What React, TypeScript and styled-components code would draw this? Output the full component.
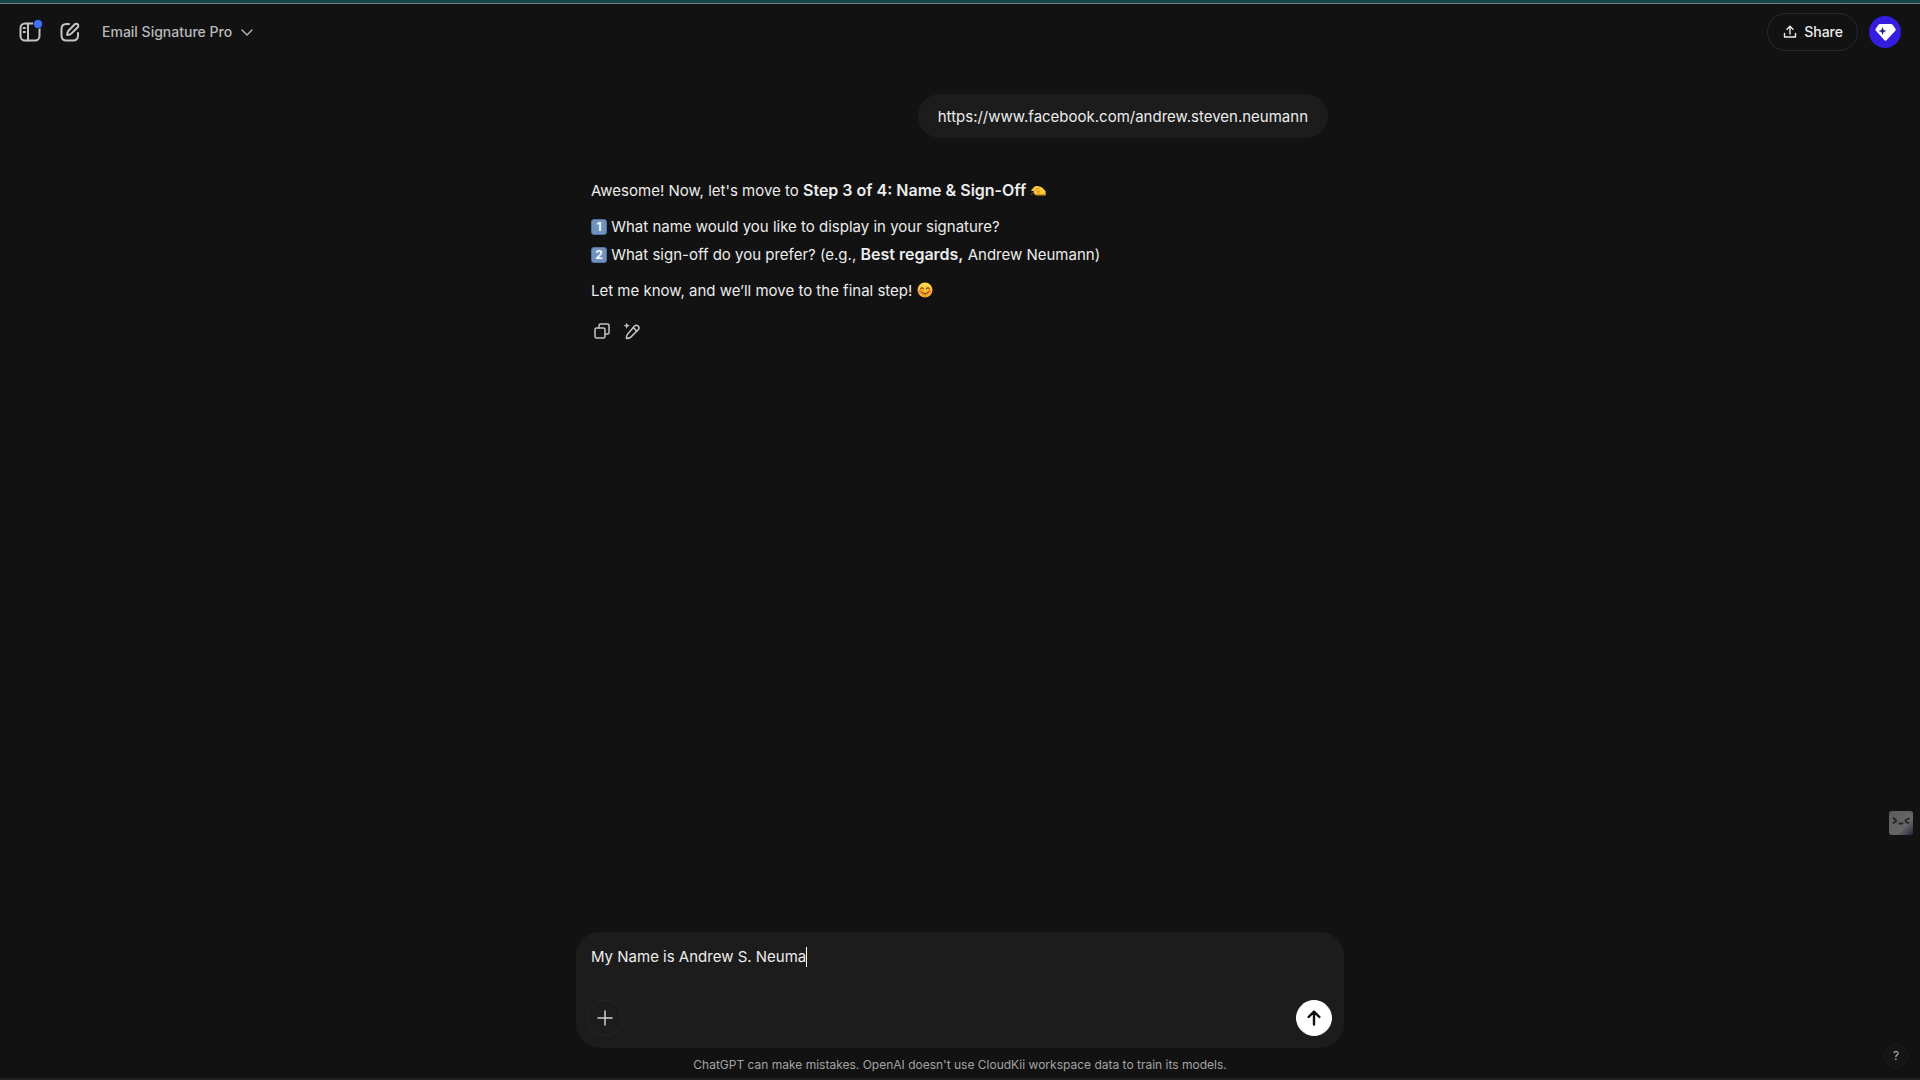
import React, { useLayoutEffect, useRef, useState } from "react";
import styled, { createGlobalStyle } from "styled-components";

const FONT = 'Inter, "Liberation Sans", sans-serif';

const GlobalStyle = createGlobalStyle`
  *, *::before, *::after { box-sizing: border-box; }
  body {
    margin: 0;
    background: #121212;
    color: #ececec;
    font: 400 15px/28px ${FONT};
  }
  button, textarea { font-family: inherit; }
`;

const Page = styled.div`
  min-height: 100vh;
  display: flex;
  flex-direction: column;
  border-bottom: 2px solid #242122;
`;

const TopStrip = styled.div`
  height: 4px;
  background: #174649;
  border-bottom: 1px solid #748586;
`;

const Header = styled.header`
  display: flex;
  align-items: center;
  justify-content: space-between;
  height: 56px;
  padding: 0 19px 0 10px;
`;

const HeaderGroup = styled.div`
  display: flex;
  align-items: center;
  gap: ${(p: { $gap?: number }) => p.$gap ?? 0}px;
`;

const IconButton = styled.button<{ $size: number }>`
  position: relative;
  display: flex;
  align-items: center;
  justify-content: center;
  width: ${(p) => p.$size}px;
  height: ${(p) => p.$size}px;
  padding: 0;
  border: 0;
  border-radius: 8px;
  background: transparent;
  color: #c4c4c4;
  cursor: pointer;
`;

const UnreadDot = styled.span`
  position: absolute;
  top: 8px;
  right: 8px;
  width: 8px;
  height: 8px;
  border-radius: 50%;
  background: #4271f5;
  box-shadow: 0 0 0 1px #10184a;
`;

const TitleButton = styled.button`
  display: flex;
  align-items: center;
  gap: 8px;
  padding: 0 12px;
  border: 0;
  background: transparent;
  color: #b9b9b9;
  font-size: 14px;
  font-weight: 500;
  line-height: 36px;
  cursor: pointer;
`;

const ShareButton = styled.button`
  display: flex;
  align-items: center;
  gap: 7px;
  height: 38px;
  padding: 0 14px 1px 15px;
  border: 1px solid #292929;
  border-radius: 19px;
  background: transparent;
  color: #ececec;
  font-size: 14px;
  font-weight: 500;
  cursor: pointer;
`;

const Avatar = styled.button`
  display: flex;
  width: 32px;
  height: 32px;
  padding: 0;
  border: 0;
  border-radius: 50%;
  background: #351de0;
  cursor: pointer;
`;

const Column = styled.main`
  flex: 1;
  width: 100%;
  max-width: 768px;
  margin: 0 auto;
  padding: 34px 16px 0 15px;
`;

const UserBubble = styled.div`
  width: fit-content;
  margin-left: auto;
  padding: 9px 20px 7px;
  border-radius: 22px;
  background: #1c1c1c;
`;

const Reply = styled.article`
  margin-top: 39px;

  p { margin: 0 0 8px; }
  strong { font-size: 16px; font-weight: 600; line-height: 20px; }
`;

const Keycap = styled.span`
  display: inline-block;
  width: 16px;
  height: 16px;
  border: 1px solid #4f749f;
  border-radius: 3px;
  background: #6f93bd;
  color: #f4f8fc;
  font-size: 12px;
  font-weight: 700;
  line-height: 14px;
  text-align: center;
  vertical-align: 1px;
`;

const EmojiSvg = styled.svg`
  width: 16px;
  height: 16px;
  vertical-align: -2px;
`;

const Actions = styled.div`
  display: flex;
  margin-top: 11px;
  margin-left: -4px;
`;

const Footer = styled.footer`
  width: 100%;
  max-width: 768px;
  margin: 0 auto;
`;

const Composer = styled.form`
  display: flex;
  flex-direction: column;
  height: 116px;
  padding: 11px 12px 12px 11px;
  border-radius: 24px;
  background: #1c1c1c;
`;

const Field = styled.div`
  position: relative;
  flex: 1;
  padding: 0 4px;
`;

const Input = styled.textarea`
  display: block;
  width: 100%;
  height: 28px;
  padding: 0;
  border: 0;
  outline: 0;
  resize: none;
  overflow: hidden;
  background: transparent;
  color: #ececec;
  caret-color: transparent;
  font-size: 15px;
  line-height: 28px;
`;

const Caret = styled.span`
  position: absolute;
  top: 4px;
  width: 1px;
  height: 20px;
  background: #ffffff;
`;

const ComposerBar = styled.div`
  display: flex;
  justify-content: space-between;
`;

const RoundButton = styled.button<{ $solid?: boolean }>`
  display: flex;
  align-items: center;
  justify-content: center;
  width: 36px;
  height: 36px;
  padding: 0;
  border: 1px solid ${(p) => (p.$solid ? "#ffffff" : "#272727")};
  border-radius: 50%;
  background: ${(p) => (p.$solid ? "#ffffff" : "transparent")};
  color: ${(p) => (p.$solid ? "#121212" : "#d0d0d0")};
  cursor: pointer;
`;

const Notice = styled.p`
  margin: 0;
  padding: 7px 0 3px;
  color: #a3a3a3;
  font-size: 12px;
  line-height: 20px;
  text-align: center;
`;

const HelpButton = styled.button`
  position: fixed;
  right: 12px;
  bottom: 12px;
  width: 24px;
  height: 24px;
  padding: 0;
  border: 1px solid #1d1d1d;
  border-radius: 50%;
  background: #151515;
  color: #b4b4b4;
  font-size: 12px;
  line-height: 22px;
  cursor: pointer;
`;

const WidgetButton = styled.button`
  position: fixed;
  right: 7px;
  bottom: 245px;
  display: flex;
  width: 24px;
  height: 24px;
  padding: 0;
  border: 0;
  border-radius: 3px;
  background: linear-gradient(135deg, #5c5c5c 0%, #666666 65%, #29263f 100%);
  cursor: pointer;
`;

const stroke = {
  fill: "none",
  stroke: "currentColor",
  strokeLinecap: "round",
  strokeLinejoin: "round",
} as const;

const SidebarIcon = () => (
  <svg width="24" height="24" viewBox="0 0 24 24" strokeWidth="2" {...stroke}>
    <rect x="2.5" y="3.5" width="19" height="17" rx="4.5" />
    <path d="M10 3.5v17" />
    <path d="M5.6 8h1.4M5.6 12h1.4" />
  </svg>
);

const ComposeIcon = () => (
  <svg width="24" height="24" viewBox="0 0 24 24" strokeWidth="2" {...stroke}>
    <path d="M11 4H8.500C5 4 3.500 5.500 3.500 9v6.500c0 3.500 1.500 5 5 5H15c3.500 0 5-1.500 5-5V13" />
    <path d="M16.800 4.300a2.050 2.050 0 0 1 2.900 2.900l-6.400 6.400c-.8.8-2.100 1.300-4.200 1.400.1-2.100.6-3.400 1.400-4.200z" />
  </svg>
);

const ChevronIcon = () => (
  <svg width="14" height="14" viewBox="0 0 14 14" strokeWidth="1.4" {...stroke}>
    <path d="M2 5 7 10 12 5" />
  </svg>
);

const UploadIcon = () => (
  <svg width="14" height="14" viewBox="0 0 14 14" strokeWidth="1.4" {...stroke}>
    <path d="M7 9V1.500M4 4.300l3-3 3 3M1.500 8.500V12h11V8.500" />
  </svg>
);

const GemIcon = () => (
  <svg width="32" height="32" viewBox="0 0 32 32">
    <path d="M11 8h11q1 0 1.600.8l3 4.200q.5.800-.1 1.600l-9 9.600q-1 1-2 0l-8.800-9.600q-.7-.8-.1-1.600l2.800-4.200Q10 8 11 8z" fill="#ffffff" />
    <path d="M13.500 11l1.100 2.900 2.900 1.100-2.900 1.100-1.100 2.900-1.100-2.900L9.500 15l2.900-1.100z" fill="#25207a" />
  </svg>
);

const CopyIcon = () => (
  <svg width="18" height="18" viewBox="0 0 18 18" strokeWidth="1.500" {...stroke}>
    <rect x="2" y="6" width="10" height="10" rx="1.500" />
    <path d="M6 6V3.500Q6 2 7.500 2h7Q16 2 16 3.500v7q0 1.500-1.500 1.500H12" />
  </svg>
);

const EditSparkIcon = () => (
  <svg width="18" height="18" viewBox="0 0 18 18" strokeWidth="1.500" {...stroke}>
    <path d="M11.600 4.100a2.500 2.500 0 0 1 3.600 3.600l-7.400 7.400c-.9.9-2.300 1.300-4.400 1.300 0-2.100.4-3.500 1.300-4.400z" />
    <path d="M10.200 5.500l3.600 3.600" />
    <path d="M3.700.4l.9 2.400 2.400.9-2.400.9-.9 2.400-.9-2.400-2.400-.9 2.400-.9z" fill="currentColor" stroke="none" />
  </svg>
);

const PlusIcon = () => (
  <svg width="18" height="18" viewBox="0 0 18 18" strokeWidth="1.500" {...stroke}>
    <path d="M9 2v14M2 9h14" />
  </svg>
);

const ArrowUpIcon = () => (
  <svg width="18" height="18" viewBox="0 0 18 18" strokeWidth="2.400" {...stroke}>
    <path d="M9 15.500V2.800M3.600 8 9 2.600 14.400 8" />
  </svg>
);

const WidgetFace = () => (
  <svg width="24" height="24" viewBox="0 0 24 24" strokeWidth="1.800" {...stroke} stroke="#262626">
    <path d="M4.500 7l3 2.800-3 2.200M10.500 12.500h3M20 7.500l-3.500 1.500q-.6 2.600 3 2.800" />
  </svg>
);

const WritingHand = () => (
  <EmojiSvg viewBox="0 0 16 16" role="img" aria-label="writing hand">
    <path d="M.8 8.600 4.600 4.600Q5.600 3.600 7.600 4l3 .8q1 .3 1.800 1l3.200 3.100v4.300H6.600c-1.400 0-2.200-.6-2.400-1.700L3.800 9.300z" fill="#fcc838" />
    <path d="M4.200 11.300c2 .9 4 .9 6.200.8l5.200-.1v1.300H6.600c-1.300 0-2.200-.7-2.400-2z" fill="#e08f1a" />
    <path d="M4.500 8.400 7 6.600l2.400.3M6.600 9.400l3.400-.2M6.800 11l3-.1" stroke="#c97d18" strokeWidth=".7" fill="none" />
    <path d="M.4 12.200l3.400-2.700.6.900-3.700 2.400z" fill="#6d6460" />
  </EmojiSvg>
);

const SmilingFace = () => (
  <EmojiSvg viewBox="0 0 16 16" role="img" aria-label="smiling face">
    <defs>
      <linearGradient id="face" x1="0" y1="0" x2="0" y2="1">
        <stop offset="0" stopColor="#ffe154" />
        <stop offset="1" stopColor="#f39a21" />
      </linearGradient>
    </defs>
    <circle cx="8" cy="8" r="7.500" fill="url(#face)" />
    <circle cx="3.300" cy="9.200" r="1.700" fill="#f2703a" opacity=".7" />
    <circle cx="12.700" cy="9.200" r="1.700" fill="#f2703a" opacity=".7" />
    <path d="M3.700 6.700q1.300-2 2.700 0M9.600 6.700q1.300-2 2.700 0M4.600 10q3.400 3.800 6.800 0" fill="none" stroke="#6b3d12" strokeWidth="1.100" strokeLinecap="round" />
  </EmojiSvg>
);

export default function App() {
  const [draft, setDraft] = useState("My Name is Andrew S. Neuma");
  const [caretX, setCaretX] = useState(0);
  const input = useRef<HTMLTextAreaElement>(null);

  useLayoutEffect(() => {
    const ctx = document.createElement("canvas").getContext("2d");
    if (!ctx || !input.current) return;
    ctx.font = `15px ${FONT}`;
    setCaretX(input.current.offsetLeft + Math.round(ctx.measureText(draft).width));
  }, [draft]);

  return (
    <>
      <GlobalStyle />
      <Page>
        <TopStrip />
        <Header>
          <HeaderGroup>
            <IconButton $size={40} type="button" aria-label="Open sidebar">
              <SidebarIcon />
              <UnreadDot />
            </IconButton>
            <IconButton $size={40} type="button" aria-label="New chat">
              <ComposeIcon />
            </IconButton>
            <TitleButton type="button">
              Email Signature Pro
              <ChevronIcon />
            </TitleButton>
          </HeaderGroup>
          <HeaderGroup $gap={11}>
            <ShareButton type="button">
              <UploadIcon />
              Share
            </ShareButton>
            <Avatar type="button" aria-label="Account">
              <GemIcon />
            </Avatar>
          </HeaderGroup>
        </Header>

        <Column>
          <UserBubble>https://www.facebook.com/andrew.steven.neumann</UserBubble>
          <Reply>
            <p>
              Awesome! Now, let's move to <strong>Step 3 of 4: Name &amp; Sign-Off</strong> <WritingHand />
            </p>
            <p>
              <Keycap>1</Keycap> What name would you like to display in your signature?
              <br />
              <Keycap>2</Keycap> What sign-off do you prefer? (e.g., <strong>Best regards,</strong> Andrew Neumann)
            </p>
            <p>
              Let me know, and we’ll move to the final step! <SmilingFace />
            </p>
            <Actions>
              <IconButton $size={30} type="button" aria-label="Copy">
                <CopyIcon />
              </IconButton>
              <IconButton $size={30} type="button" aria-label="Edit in canvas">
                <EditSparkIcon />
              </IconButton>
            </Actions>
          </Reply>
        </Column>

        <Footer>
          <Composer onSubmit={(e) => e.preventDefault()}>
            <Field>
              <Input
                ref={input}
                aria-label="Message"
                rows={1}
                value={draft}
                onChange={(e) => setDraft(e.target.value)}
              />
              <Caret style={{ left: caretX }} />
            </Field>
            <ComposerBar>
              <RoundButton type="button" aria-label="Add attachment">
                <PlusIcon />
              </RoundButton>
              <RoundButton $solid type="submit" aria-label="Send message">
                <ArrowUpIcon />
              </RoundButton>
            </ComposerBar>
          </Composer>
          <Notice>
            ChatGPT can make mistakes. OpenAI doesn't use CloudKii workspace data to train its models.
          </Notice>
        </Footer>
      </Page>
      <WidgetButton type="button" aria-label="Assistant">
        <WidgetFace />
      </WidgetButton>
      <HelpButton type="button" aria-label="Help">?</HelpButton>
    </>
  );
}
